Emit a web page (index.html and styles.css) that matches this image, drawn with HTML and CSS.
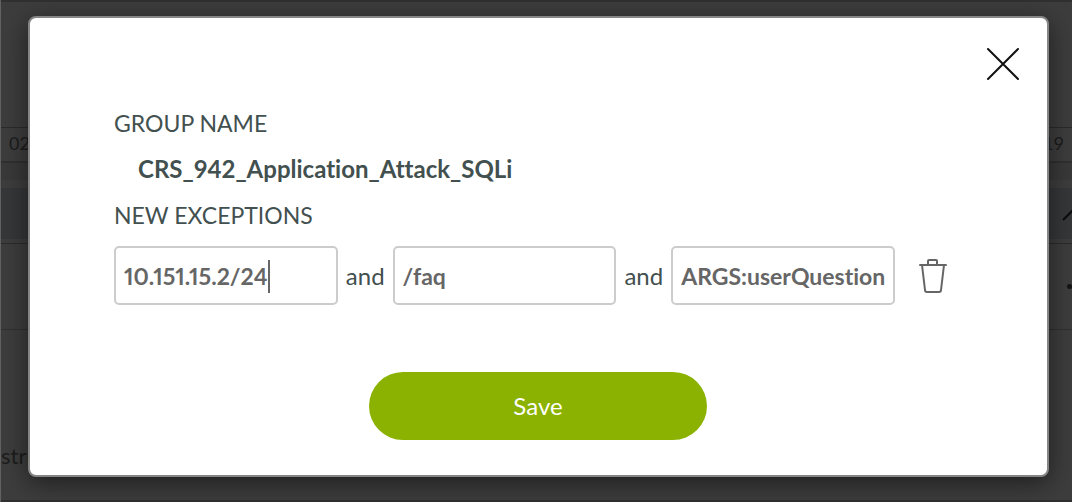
FILE: index.html
```html
<!DOCTYPE html>
<html lang="en">
<head>
<meta charset="utf-8">
<title>New exceptions</title>
<link rel="stylesheet" href="styles.css">
</head>
<body>
<div class="page" aria-hidden="true">
  <div class="toolbar"></div>
  <div class="timeline"><span>02</span><span>19</span></div>
  <div class="gap"></div>
  <div class="table-head">
    <svg width="10" height="14" viewBox="0 0 10 14" fill="none" stroke="#0c0c0c" stroke-width="2"><path d="M1 12L12 1"/></svg>
  </div>
  <div class="table-row"><span class="dot"></span></div>
  <div class="description">stru</div>
  <div class="footer-line"></div>
</div>
<div class="overlay">
  <form class="dialog" role="dialog" aria-label="New exceptions">
    <div class="dialog-top">
      <button class="icon-button" type="button" aria-label="Close">
        <svg width="34" height="34" viewBox="0 0 34 34" fill="none" stroke="#111" stroke-width="2" stroke-linecap="round"><path d="M2 2L32 32M32 2L2 32"/></svg>
      </button>
    </div>
    <div class="dialog-body">
      <div class="label">GROUP NAME</div>
      <div class="group-name">CRS_942_Application_Attack_SQLi</div>
      <div class="label">NEW EXCEPTIONS</div>
      <div class="exception">
        <div class="field">
          <input type="text" value="10.151.15.2/24" aria-label="IP address">
          <span class="caret"></span>
        </div>
        <span class="and">and</span>
        <div class="field"><input type="text" value="/faq" aria-label="Path"></div>
        <span class="and">and</span>
        <div class="field"><input type="text" value="ARGS:userQuestion" aria-label="Argument"></div>
        <button class="icon-button delete" type="button" aria-label="Delete exception">
          <svg width="28" height="36" viewBox="0 0 28 36" fill="none" stroke="#666" stroke-width="2" stroke-linejoin="round" stroke-linecap="round"><path d="M1 7H27M9 7V3Q9 2 10 2H17Q18 2 18 3V7M3 7L6 32Q6 34 8 34H20Q22 34 22 32L25 7"/></svg>
        </button>
      </div>
    </div>
    <div class="actions"><button class="save" type="submit">Save</button></div>
  </form>
</div>
</body>
</html>
```
FILE: styles.css
```css
* {
  box-sizing: border-box;
}

body {
  margin: 0;
  min-height: 100vh;
  overflow: hidden;
  position: relative;
  background: #3d3d3d;
  color: #42504f;
  font-family: Lato, "Open Sans", sans-serif;
  font-size: 24px;
  font-variant-ligatures: none;
  line-height: 32px;
}

.page {
  display: flex;
  flex-direction: column;
  height: 100vh;
  border-left: 1px solid #626262;
  color: #1c1c1c;
}

.toolbar {
  height: 128px;
  border-top: 2px solid #303030;
  border-bottom: 1px solid #2b2b2b;
}

.timeline {
  display: flex;
  justify-content: space-between;
  height: 35px;
  padding: 0 8px;
  border-bottom: 2px solid #303030;
  font-size: 18px;
  line-height: 30px;
}

.gap {
  height: 25px;
  border-bottom: 8px solid #3d3d3d;
  background: #393939;
}

.table-head {
  display: flex;
  justify-content: flex-end;
  height: 56px;
  padding-top: 20px;
  border-bottom: 1px solid #2b2b2b;
  background: linear-gradient(#353738 51px, #3d3d3d 51px);
}

.table-row {
  display: flex;
  align-items: center;
  justify-content: flex-end;
  height: 86px;
  border-bottom: 1px solid #303030;
}

.dot {
  width: 5px;
  height: 5px;
  border-radius: 50%;
  background: #141414;
}

.description {
  flex: 1;
  padding-top: 110px;
  font-size: 22px;
}

.footer-line {
  height: 2px;
  background: #303030;
}

.overlay {
  position: absolute;
  inset: 0;
  padding: 16px 23px 0 28px;
}

.dialog {
  padding: 29px 27px 35px 26px;
  border: 2px solid #858585;
  border-radius: 8px;
  background: #fff;
  box-shadow: 0 6px 26px rgba(0, 0, 0, 0.5);
}

.dialog-top {
  display: flex;
  justify-content: flex-end;
}

.icon-button {
  display: flex;
  padding: 0;
  border: 0;
  background: none;
}

.dialog-body {
  padding: 26px 57px 0 58px;
}

.label {
  font-size: 23px;
}

.group-name {
  padding: 14px 24px;
  font-weight: 700;
}

.exception {
  display: flex;
  align-items: center;
  gap: 8px;
  margin-top: 15px;
  padding-right: 16px;
}

.field {
  position: relative;
  flex: 1;
  min-width: 0;
}

.field input {
  display: block;
  width: 100%;
  height: 59px;
  padding: 0 8px;
  border: 2px solid #ccc;
  border-radius: 5px;
  background: #fff;
  color: #666;
  font: inherit;
  font-size: 23px;
  font-weight: 700;
  font-variant-numeric: proportional-nums;
}

.caret {
  position: absolute;
  top: 14px;
  left: 154px;
  width: 2px;
  height: 33px;
  background: #666;
}

.delete {
  margin-left: 16px;
}

.actions {
  display: flex;
  justify-content: center;
  padding-top: 67px;
}

.save {
  width: 35%;
  height: 68px;
  border: 0;
  border-radius: 34px;
  background: #8bb200;
  color: #fff;
  font: inherit;
}
```
